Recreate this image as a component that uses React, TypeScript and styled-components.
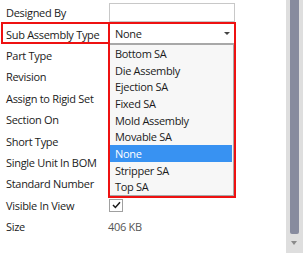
import styled, { createGlobalStyle } from "styled-components";

const GlobalStyle = createGlobalStyle`
  html, body {
    margin: 0;
    padding: 0;
    background: #ffffff;
    overflow: hidden;
  }
  body {
    font-family: "Open Sans", "Noto Sans", Arial, sans-serif;
    font-size: 11px;
    letter-spacing: -0.3px;
    color: #1b1b1b;
  }
`

const ROW_H = 21.4

const Frame = styled.div`
  display: flex;
  width: 303px;
  height: 253px;
  overflow: hidden;
`

const Sheet = styled.div`
  flex: 1;
  display: flex;
  flex-direction: column;
  padding-top: 2px;
`

const PropRow = styled.div`
  display: grid;
  grid-template-columns: 108px 127px;
  height: ${ROW_H}px;
  align-items: center;
`

const Label = styled.div<{ $marked?: boolean }>`
  position: relative;
  height: 100%;
  display: flex;
  align-items: center;
  padding-left: 6px;
  white-space: nowrap;
  ${p => p.$marked && `
    &:after {
      content: "";
      position: absolute;
      left: 1px;
      top: -1.4px;
      width: 109px;
      height: 22px;
      box-sizing: border-box;
      border: 2px solid #ee1111;
    }
  `}
`

const Cell = styled.div`
  position: relative;
  height: 100%;
  display: flex;
  align-items: center;
`

const TextBox = styled.div`
  box-sizing: border-box;
  margin-left: 1px;
  width: 126px;
  height: 19px;
  background: #fff;
  border: 1px solid #c8c8c8;
`

const Value = styled.span`
  color: #555;
`

const DropFrame = styled.div`
  position: absolute;
  z-index: 5;
  left: 0;
  top: -1.4px;
  width: 128px;
  box-sizing: border-box;
  border: 2px solid #ee1111;
  background: #f7f7f7;
`

const SelectBox = styled.div`
  height: 19px;
  display: flex;
  align-items: center;
  justify-content: space-between;
  padding: 0 4px 0 5px;
  background: #fff;
  border-bottom: 2px solid #a8a8a8;
`

const Arrow = styled.span`
  width: 0;
  height: 0;
  border-left: 3px solid transparent;
  border-right: 3px solid transparent;
  border-top: 3px solid #444;
`

const OptionList = styled.ul`
  list-style: none;
  margin: 0;
  padding: 0 1px 0 0;
  border-bottom: 1px solid #a8a8a8;
  border-right: 1px solid #a8a8a8;
`

const Option = styled.li<{ $selected?: boolean }>`
  height: 16.7px;
  display: flex;
  align-items: center;
  padding-left: 5px;
  color: ${p => (p.$selected ? "#fff" : "#1b1b1b")};
  background: ${p => (p.$selected ? "#3892f2" : "transparent")};
`

const Check = styled.div`
  box-sizing: border-box;
  margin-left: 1px;
  width: 14px;
  height: 13px;
  border: 1px solid #a0a0a0;
  background: #fff;
  display: flex;
  align-items: center;
  justify-content: center;
`

const Scroll = styled.div`
  width: 17px;
  height: 100%;
  background: #dedede;
  display: flex;
  flex-direction: column;
  align-items: flex-start;
`

const Thumb = styled.div`
  margin-left: 4px;
  width: 9px;
  height: 234px;
  background: #878b9e;
  border-radius: 0 0 2px 2px;
`

const DownArrow = styled.div`
  margin: 7px 0 0 5px;
  width: 0;
  height: 0;
  border-left: 3.5px solid transparent;
  border-right: 3.5px solid transparent;
  border-top: 4px solid #8a8a8a;
`

const options = [
  "Bottom SA",
  "Die Assembly",
  "Ejection SA",
  "Fixed SA",
  "Mold Assembly",
  "Movable SA",
  "None",
  "Stripper SA",
  "Top SA",
]

const plainRows = [
  "Part Type",
  "Revision",
  "Assign to Rigid Set",
  "Section On",
  "Short Type",
  "Single Unit In BOM",
  "Standard Number",
]

export default function App() {
  return (
    <>
      <GlobalStyle />
      <Frame>
        <Sheet>
          <PropRow>
            <Label>Designed By</Label>
            <Cell><TextBox /></Cell>
          </PropRow>
          <PropRow>
            <Label $marked>Sub Assembly Type</Label>
            <Cell>
              <DropFrame>
                <SelectBox>
                  <span>None</span>
                  <Arrow />
                </SelectBox>
                <OptionList>
                  {options.map(o => (
                    <Option key={o} $selected={o === "None"}>{o}</Option>
                  ))}
                </OptionList>
              </DropFrame>
            </Cell>
          </PropRow>
          {plainRows.map(r => (
            <PropRow key={r}>
              <Label>{r}</Label>
              <Cell />
            </PropRow>
          ))}
          <PropRow>
            <Label>Visible In View</Label>
            <Cell>
              <Check>
                <svg width="9" height="8" viewBox="0 0 9 8">
                  <polyline points="1,4 3.4,6.5 8,1.2" fill="none" stroke="#1b1b1b" strokeWidth="1.5" />
                </svg>
              </Check>
            </Cell>
          </PropRow>
          <PropRow>
            <Label>Size</Label>
            <Cell><Value>406 KB</Value></Cell>
          </PropRow>
        </Sheet>
        <Scroll>
          <Thumb />
          <DownArrow />
        </Scroll>
      </Frame>
    </>
  );
}
